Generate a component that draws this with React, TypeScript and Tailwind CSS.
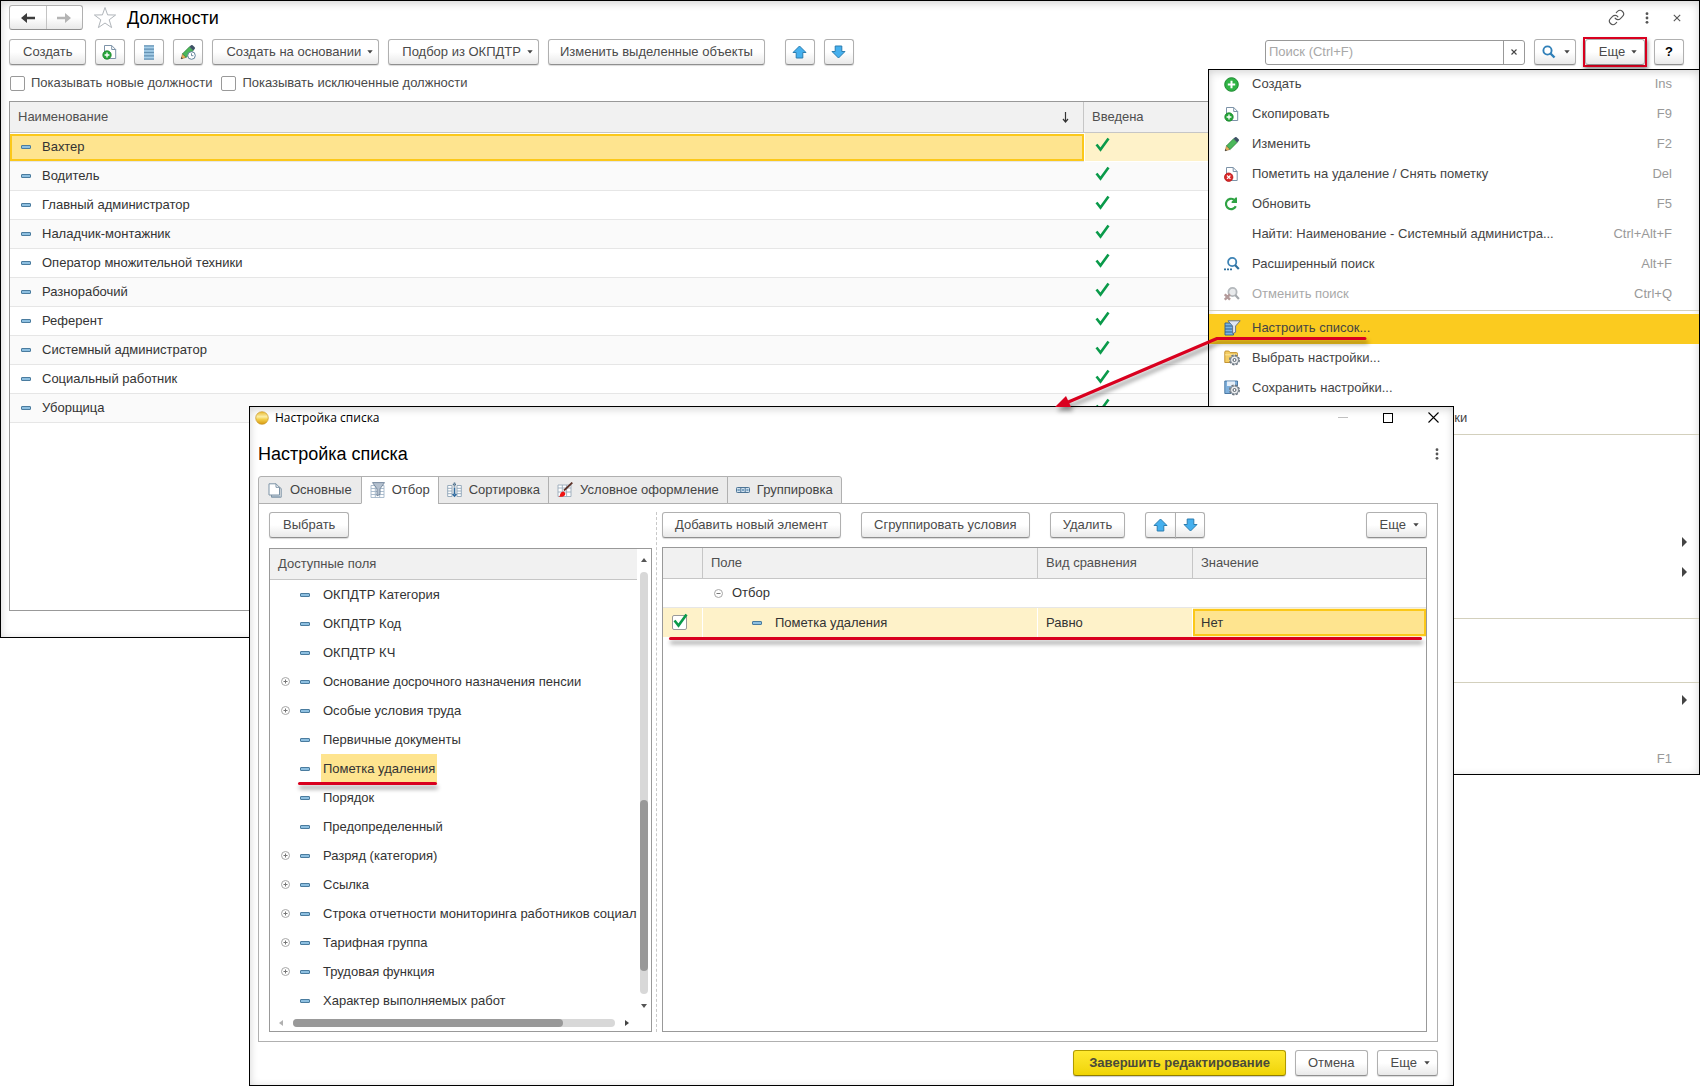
import type { ReactNode } from 'react';
import { Link } from 'lucide-react';

interface MenuEntry {
  label?: string;
  hotkey?: string;
  icon?: ReactNode;
  disabled?: boolean;
  active?: boolean;
  submenu?: boolean;
}

interface FieldItem {
  label: string;
  expandable?: boolean;
  selected?: boolean;
}

/* ---------- Icons ---------- */

const Caret = () => (
  <svg width="6" height="4" viewBox="0 0 6 4" className="shrink-0">
    <path d="M.3.3h5.4L3 3.4z" fill="#444" />
  </svg>
);

const DashIcon = () => (
  <svg width="10" height="4" viewBox="0 0 10 4" className="shrink-0">
    <rect x=".5" y=".5" width="9" height="3" rx=".4" fill="#8dbfe0" stroke="#4a7c9f" />
  </svg>
);

const CheckIcon = () => (
  <svg width="15" height="15" viewBox="0 0 15 15">
    <path d="M1.5 7.5l4 5L13.5 1.5" fill="none" stroke="#0a9a4a" strokeWidth="2.6" />
  </svg>
);

const ArrowUpIcon = () => (
  <svg width="15" height="14" viewBox="0 0 15 14">
    <path d="M7.5 1L14 7.5h-3.2V13H4.2V7.5H1z" fill="#45b0ee" stroke="#2b7db0" strokeLinejoin="round" />
  </svg>
);

const ArrowDownIcon = () => (
  <svg width="15" height="14" viewBox="0 0 15 14">
    <path d="M7.5 13L14 6.5h-3.2V1H4.2v5.5H1z" fill="#45b0ee" stroke="#2b7db0" strokeLinejoin="round" />
  </svg>
);

const NavArrow = ({ forward }: { forward?: boolean }) => (
  <svg width="14" height="12" viewBox="0 0 14 12">
    {forward ? (
      <path d="M0 4.8h8V1l6 5-6 5V7.2H0z" fill="#b4b4b4" />
    ) : (
      <path d="M14 4.8H6V1L0 6l6 5V7.2h8z" fill="#3c3c3c" />
    )}
  </svg>
);

const StarIcon = () => (
  <svg width="24" height="24" viewBox="0 0 24 24">
    <path
      d="M12 1.5l2.6 7.4 8 .1-6.4 4.8 2.4 7.8L12 17l-6.6 4.6 2.4-7.8L1.4 9l8-.1z"
      fill="#fff"
      stroke="#b0b5ba"
    />
  </svg>
);

const CopyDocIcon = () => (
  <svg width="16" height="16" viewBox="0 0 16 16">
    <path d="M2.5 1.5h7.2l4 4v9H2.5z" fill="#fff" stroke="#7d93a8" />
    <path d="M9.7 1.5v4h4" fill="none" stroke="#7d93a8" />
    <circle cx="5" cy="11" r="4.2" fill="#27a63a" stroke="#178227" strokeWidth=".8" />
    <path d="M5 8.6v4.8M2.6 11h4.8" stroke="#fff" strokeWidth="1.3" />
  </svg>
);

const DeleteDocIcon = () => (
  <svg width="16" height="16" viewBox="0 0 16 16">
    <path d="M2.5 1.5h6.7l4 4v9H2.5z" fill="#fff" stroke="#7d93a8" />
    <path d="M9.2 1.5v4h4" fill="none" stroke="#7d93a8" />
    <circle cx="4.7" cy="11.2" r="4.2" fill="#dc2a2a" stroke="#b01818" strokeWidth=".8" />
    <path d="M3 9.5l3.4 3.4M6.4 9.5L3 12.9" stroke="#fff" strokeWidth="1.2" />
  </svg>
);

const ListIcon = () => (
  <svg width="12" height="15" viewBox="0 0 12 15">
    <rect x="1" y=".5" width="10" height="14" fill="#8fbcdb" />
    <path d="M1 .8h10M1 4.2h10M1 7.5h10M1 10.8h10M1 14.2h10" stroke="#6592b3" />
    <path d="M1 2.5h10M1 5.8h10M1 9.1h10M1 12.5h10" stroke="#a9cfe8" />
  </svg>
);

const PencilShape = () => (
  <>
    <path d="M1.2 14.8l1.3-5 3.7 3.6z" fill="#f0b45a" stroke="#8a6a3a" strokeWidth=".6" />
    <path d="M2.5 9.8l7-7 3.700 3.600-7 7z" fill="#4bb85a" stroke="#2f7a3c" strokeWidth=".7" />
    <path d="M9.500 2.800l1.500-1.500q.8-.7 1.600 0l2.100 2q.7.800 0 1.600l-1.500 1.500z" fill="#3e5266" />
    <path d="M.9 15.100l.6-2 1.400 1.400z" fill="#3a3a3a" />
  </>
);

const PencilIcon = () => (
  <svg width="16" height="16" viewBox="0 0 16 16">
    <PencilShape />
  </svg>
);

const PencilClockIcon = () => (
  <svg width="16" height="16" viewBox="0 0 16 16">
    <PencilShape />
    <circle cx="11.5" cy="11.5" r="3.8" fill="#fff" stroke="#5d8099" />
    <path d="M11.5 9.3v2.4h1.9" fill="none" stroke="#5d8099" strokeWidth=".9" />
  </svg>
);

const PlusCircleIcon = () => (
  <svg width="15" height="15" viewBox="0 0 15 15">
    <circle cx="7.5" cy="7.5" r="6.8" fill="#2fb344" stroke="#1d8a30" />
    <path d="M7.5 3.8v7.4M3.8 7.5h7.4" stroke="#fff" strokeWidth="2" />
  </svg>
);

const RefreshIcon = () => (
  <svg width="14" height="14" viewBox="0 0 14 14">
    <path d="M11.8 9.3A5.2 5.2 0 1 1 10 2.6" fill="none" stroke="#2fa344" strokeWidth="2.2" />
    <path d="M7.6 5.9V4.7L11.6.6H13v5.3z" fill="#2fa344" />
  </svg>
);

const SearchIcon = () => (
  <svg width="14" height="14" viewBox="0 0 14 14">
    <circle cx="5.5" cy="5.5" r="4.1" fill="none" stroke="#2f7fb8" strokeWidth="1.9" />
    <path d="M8.5 8.5l4 4" stroke="#2f7fb8" strokeWidth="2.4" />
  </svg>
);

const AdvancedSearchIcon = () => (
  <svg width="16" height="14" viewBox="0 0 16 14">
    <circle cx="8.2" cy="5" r="4.1" fill="none" stroke="#3d83b5" strokeWidth="1.8" />
    <path d="M11 8l3.8 3.9" stroke="#2f6f9c" strokeWidth="2.2" />
    <path d="M0 12.4h2M3 12.4h2M6 12.4h2" stroke="#2f6f9c" strokeWidth="1.8" />
  </svg>
);

const CancelSearchIcon = () => (
  <svg width="16" height="14" viewBox="0 0 16 14">
    <circle cx="8.5" cy="5" r="4.1" fill="#e8eaec" stroke="#b4b8bc" strokeWidth="1.8" />
    <path d="M11.3 8l3.6 3.9" stroke="#a4a8ac" strokeWidth="2.2" />
    <path d="M.8 7.3l5.2 5.4M6 7.3L.8 12.7" stroke="#b39a9a" strokeWidth="2.4" />
  </svg>
);

const FunnelListIcon = () => (
  <svg width="17" height="16" viewBox="0 0 17 16">
    <path d="M1 3h8.500v12H1z" fill="#7ab4e4" stroke="#2f5f8c" strokeWidth=".9" />
    <path d="M1 6h8.500M1 9h8.500M1 12h8.500" stroke="#2f5f8c" />
    <path d="M4 .8h12.200L11.600 6v6.200l-3 1.400V6z" fill="#dfe6f2" stroke="#5b6d86" strokeWidth=".9" />
  </svg>
);

const Gear = () => (
  <>
    <circle cx="10.5" cy="10" r="4.6" fill="#eceef0" stroke="#6b7681" strokeWidth="1.8" strokeDasharray="2.2 1.4" />
    <circle cx="10.5" cy="10" r="4" fill="#eef0f2" stroke="#6b7681" strokeWidth=".8" />
    <circle cx="10.5" cy="10" r="1.5" fill="#fff" stroke="#4f5963" />
  </>
);

const FolderGearIcon = () => (
  <svg width="17" height="16" viewBox="0 0 17 16">
    <path d="M.8 12.5V2q0-1 1-1h3l1.4 1.6h6.3q1 0 1 1v8.9z" fill="#f4cd62" stroke="#bd8a26" strokeWidth=".9" />
    <path d="M1.2 4.8h12" stroke="#fbe6a6" />
    <Gear />
  </svg>
);

const DiskGearIcon = () => (
  <svg width="17" height="16" viewBox="0 0 17 16">
    <path d="M.8 1h12.7v12.5H.8z" fill="#7fb0dc" stroke="#3f6f9c" strokeWidth=".9" />
    <path d="M3 1.4h8v4.6H3z" fill="#e6eff8" />
    <Gear />
  </svg>
);

const DotsIcon = () => (
  <svg width="4" height="12" viewBox="0 0 4 12" fill="#555">
    <circle cx="2" cy="1.7" r="1.4" />
    <circle cx="2" cy="6" r="1.4" />
    <circle cx="2" cy="10.3" r="1.4" />
  </svg>
);

const CrossIcon = () => (
  <svg width="8" height="8" viewBox="0 0 8 8">
    <path d="M.8.8l6.4 6.4M7.2.8L.8 7.2" stroke="#555" strokeWidth="1.1" />
  </svg>
);

const PagesIcon = () => (
  <svg width="14" height="15" viewBox="0 0 14 15">
    <path d="M3.500 3v9.500H12v1.800H3.500z" fill="#a9bccb" />
    <path d="M1 .8h7L11.500 4.300V12H1z" fill="#fff" stroke="#7c93a6" />
    <path d="M8 .8v3.500h3.500" fill="none" stroke="#7c93a6" />
    <path d="M3.500 12v2.200h9.700V5.500l-1.700-1.200" fill="none" stroke="#7c93a6" />
  </svg>
);

const FunnelTableIcon = () => (
  <svg width="15" height="16" viewBox="0 0 15 16">
    <path d="M1 3.5h13v12H1zM5.3 3.5v12M9.7 3.5v12M1 6.5h13M1 9.5h13M1 12.5h13" fill="#fff" stroke="#a3b6c8" strokeWidth=".9" />
    <path d="M2.500.6h12L10 6.800v5.500l-3 1.600V6.800z" fill="#b4c0ce" stroke="#6f8398" strokeWidth=".9" />
  </svg>
);

const SortIcon = () => (
  <svg width="15" height="16" viewBox="0 0 15 16">
    <path
      d="M.7 3.500h4.300v11H.7zM10 3.500h4.300v11H10zM.7 6.300h4.300M.7 9h4.300M.7 11.700h4.300M10 6.300h4.300M10 9h4.300M10 11.700h4.300"
      fill="#fff"
      stroke="#8fa5b8"
      strokeWidth=".9"
    />
    <path d="M7.500 5.500v7M5.600 12l1.900 2.200L9.400 12" fill="none" stroke="#2f6ba0" strokeWidth="1.500" />
    <path d="M7.500.5v4.500M5.800 2.500h3.400" stroke="#4c6f8c" strokeWidth="1.500" strokeDasharray="1.200 .8" />
  </svg>
);

const BrushIcon = () => (
  <svg width="16" height="16" viewBox="0 0 16 16">
    <path d="M1 3h13v11.5H1zM5.3 3v11.5M9.6 3v11.5M1 6h13M1 10h13" fill="#fff" stroke="#9aaaba" strokeWidth=".9" />
    <path d="M7 8.500L15.300.6" stroke="#5a3026" strokeWidth="1.800" />
    <path d="M1.800 14.800q1.300-.8 1.400-2.700.8-2.900 3.400-2.700l1.700 1.700q.2 3.200-3 3.700z" fill="#f01414" />
  </svg>
);

const GroupIcon = () => (
  <svg width="14" height="6" viewBox="0 0 14 6">
    <rect x=".5" y=".5" width="13" height="5" rx=".8" fill="#cfe0ee" stroke="#4d7495" />
    <path d="M4.800.5v5M9.200.5v5" stroke="#4d7495" />
    <path d="M1.500 3h2.300M6 3h2M10.400 3h2" stroke="#5f8fb5" strokeWidth="1.500" />
  </svg>
);

const ExpandIcon = ({ open }: { open?: boolean }) => (
  <svg width="9" height="9" viewBox="0 0 9 9" fill="none" stroke="#a6a6a6">
    <circle cx="4.5" cy="4.5" r="4" />
    <path d={open ? 'M2.500 4.500h4' : 'M2.500 4.500h4M4.500 2.500v4'} stroke="#777" />
  </svg>
);

const AppBallIcon = () => (
  <svg width="14" height="14" viewBox="0 0 14 14">
    <defs>
      <linearGradient id="ball" x1="0" y1="0" x2="0" y2="1">
        <stop offset="0" stopColor="#e9b92c" />
        <stop offset=".4" stopColor="#fbeea8" />
        <stop offset=".6" stopColor="#f3cf4c" />
        <stop offset="1" stopColor="#d79a12" />
      </linearGradient>
    </defs>
    <circle cx="7" cy="7" r="6.3" fill="url(#ball)" stroke="#c9962a" strokeWidth=".7" />
  </svg>
);

/* ---------- Data ---------- */

const POSITIONS: string[] = [
  'Вахтер',
  'Водитель',
  'Главный администратор',
  'Наладчик-монтажник',
  'Оператор множительной техники',
  'Разнорабочий',
  'Референт',
  'Системный администратор',
  'Социальный работник',
  'Уборщица',
];

const MENU_GROUPS: MenuEntry[][] = [
  [
    { label: 'Создать', hotkey: 'Ins', icon: <PlusCircleIcon /> },
    { label: 'Скопировать', hotkey: 'F9', icon: <CopyDocIcon /> },
    { label: 'Изменить', hotkey: 'F2', icon: <PencilIcon /> },
    { label: 'Пометить на удаление / Снять пометку', hotkey: 'Del', icon: <DeleteDocIcon /> },
    { label: 'Обновить', hotkey: 'F5', icon: <RefreshIcon /> },
    { label: 'Найти: Наименование - Системный администра...', hotkey: 'Ctrl+Alt+F' },
    { label: 'Расширенный поиск', hotkey: 'Alt+F', icon: <AdvancedSearchIcon /> },
    { label: 'Отменить поиск', hotkey: 'Ctrl+Q', icon: <CancelSearchIcon />, disabled: true },
  ],
  [
    { label: 'Настроить список...', icon: <FunnelListIcon />, active: true },
    { label: 'Выбрать настройки...', icon: <FolderGearIcon /> },
    { label: 'Сохранить настройки...', icon: <DiskGearIcon /> },
    { label: 'Установить стандартные настройки' },
  ],
  [{}, {}, {}, { submenu: true }, { submenu: true }, {}],
  [{}, {}],
  [{ submenu: true }, {}, { hotkey: 'F1' }],
];

const FIELDS: FieldItem[] = [
  { label: 'ОКПДТР Категория' },
  { label: 'ОКПДТР Код' },
  { label: 'ОКПДТР КЧ' },
  { label: 'Основание досрочного назначения пенсии', expandable: true },
  { label: 'Особые условия труда', expandable: true },
  { label: 'Первичные документы' },
  { label: 'Пометка удаления', selected: true },
  { label: 'Порядок' },
  { label: 'Предопределенный' },
  { label: 'Разряд (категория)', expandable: true },
  { label: 'Ссылка', expandable: true },
  { label: 'Строка отчетности мониторинга работников социальн', expandable: true },
  { label: 'Тарифная группа', expandable: true },
  { label: 'Трудовая функция', expandable: true },
  { label: 'Характер выполняемых работ' },
];

const TABS: { title: string; icon: ReactNode; active?: boolean }[] = [
  { title: 'Основные', icon: <PagesIcon /> },
  { title: 'Отбор', icon: <FunnelTableIcon />, active: true },
  { title: 'Сортировка', icon: <SortIcon /> },
  { title: 'Условное оформление', icon: <BrushIcon /> },
  { title: 'Группировка', icon: <GroupIcon /> },
];

/* ---------- Controls ---------- */

const BTN =
  'flex h-[26px] shrink-0 items-center justify-center rounded-[3px] border border-[#b0b0b0] border-b-[#8f8f8f] bg-linear-to-b from-white from-50% to-[#e9e9e9] text-[#4a4a4a] shadow-[0_1px_1px_rgba(0,0,0,0.15)] whitespace-nowrap';

const Button = ({ children, className = 'px-3', label }: { children: ReactNode; className?: string; label?: string }) => (
  <button type="button" aria-label={label} className={`${BTN} ${className}`}>
    {children}
  </button>
);

const CheckOption = ({ label }: { label: string }) => (
  <label className="flex items-center gap-[6px] text-[#4a4a4a]">
    <input type="checkbox" className="h-[15px] w-[15px] appearance-none rounded-[2px] border border-[#999] bg-white" />
    {label}
  </label>
);

const MoreMenu = () => (
  <nav className="absolute top-[69px] right-0 w-[492px] border border-black bg-white shadow-[inset_0_2px_8px_rgba(0,0,0,0.18)]">
    {MENU_GROUPS.map((group, g) => (
      <div key={g} className={g > 0 ? 'border-t border-[#d3d0bd] pt-[3px]' : ''}>
        {group.map((item, i) => (
          <button
            type="button"
            key={i}
            disabled={item.disabled}
            className={`flex h-[30px] w-full items-center pr-[27px] pb-[2px] pl-[15px] text-left ${item.active ? 'bg-[#fbcb1f]' : ''} ${g === 4 ? 'last:h-7' : ''}`}
          >
            <span className="flex w-7 shrink-0">{item.icon}</span>
            <span className={item.disabled ? 'flex-1 text-[#a9a9a9]' : 'flex-1 text-[#444]'}>{item.label}</span>
            <span className="text-[#999]">{item.hotkey}</span>
            {item.submenu && (
              <svg width="5" height="10" viewBox="0 0 5 10" className="-mr-[15px]">
                <path d="M0 0l5 5-5 5z" fill="#444" />
              </svg>
            )}
          </button>
        ))}
      </div>
    ))}
  </nav>
);

const PositionsWindow = () => (
  <main className="w-full border border-black bg-white pb-[26px] shadow-[inset_0_2px_8px_rgba(0,0,0,0.18)]">
    <header className="flex h-[29px] items-center pt-1 pr-[18px] pl-2">
      <div className="flex h-[25px] w-[74px] rounded-[3px] border border-[#b0b0b0] border-b-[#8f8f8f] bg-linear-to-b from-white from-50% to-[#e9e9e9]">
        <button type="button" aria-label="Назад" className="flex flex-1 items-center justify-center border-r border-[#c4c4c4]">
          <NavArrow />
        </button>
        <button type="button" aria-label="Вперед" className="flex flex-1 items-center justify-center">
          <NavArrow forward />
        </button>
      </div>
      <button type="button" aria-label="В избранное" className="ml-[10px]">
        <StarIcon />
      </button>
      <h1 className="ml-[10px] flex-1 text-lg leading-6 text-black">Должности</h1>
      <button type="button" aria-label="Ссылка" className="mr-5">
        <Link size={17} strokeWidth={1.6} color="#555" />
      </button>
      <button type="button" aria-label="Меню" className="mr-6">
        <DotsIcon />
      </button>
      <button type="button" aria-label="Закрыть">
        <CrossIcon />
      </button>
    </header>

    <div className="mt-[7px] flex h-[30px] items-center gap-[9px] pr-[15px] pl-2">
      <Button className="px-[13px]">Создать</Button>
      <Button className="w-[30px]" label="Скопировать">
        <CopyDocIcon />
      </Button>
      <Button className="w-[30px]" label="Список">
        <ListIcon />
      </Button>
      <Button className="w-[30px]" label="История">
        <PencilClockIcon />
      </Button>
      <Button className="gap-[6px] pr-[5px] pl-[13px]">
        Создать на основании <Caret />
      </Button>
      <Button className="gap-[6px] pr-[5px] pl-[13px]">
        Подбор из ОКПДТР <Caret />
      </Button>
      <Button className="px-[11px]">Изменить выделенные объекты</Button>
      <Button className="ml-[11px] w-[30px]" label="Вверх">
        <ArrowUpIcon />
      </Button>
      <Button className="w-[30px]" label="Вниз">
        <ArrowDownIcon />
      </Button>
      <div className="ml-auto flex h-[25px] w-[260px] rounded-[3px] border border-[#999]">
        <input
          type="text"
          aria-label="Поиск"
          placeholder="Поиск (Ctrl+F)"
          className="min-w-0 flex-1 px-[3px] outline-none placeholder:text-[#a8a8a8]"
        />
        <button type="button" aria-label="Очистить" className="flex w-[21px] items-center justify-center border-l border-[#999]">
          <svg width="6" height="6" viewBox="0 0 6 6">
            <path d="M.5.5l5 5M5.500.5l-5 5" stroke="#444" strokeWidth="1.100" />
          </svg>
        </button>
      </div>
      <Button className="w-[42px] gap-2 pl-[2px]" label="Найти">
        <SearchIcon />
        <Caret />
      </Button>
      <div className="-mx-[2px] border-2 border-[#d9001f] shadow-[1px_3px_4px_rgba(0,0,0,0.4)]">
        <Button className="w-[60px] gap-[6px] pl-[6px]">
          Еще <Caret />
        </Button>
      </div>
      <Button className="w-[30px] font-bold text-black" label="Справка">
        ?
      </Button>
    </div>

    <div className="-mt-[2px] flex h-9 items-center gap-[9px] pl-[9px]">
      <CheckOption label="Показывать новые должности" />
      <CheckOption label="Показывать исключенные должности" />
    </div>

    <div className="mx-2 min-h-[510px] border border-[#999] bg-white">
      <table className="w-full table-fixed border-separate border-spacing-0 text-left">
        <thead>
          <tr className="bg-[#f1f1f1] text-[#4f4f4f]">
            <th className="h-[31px] border-r border-b border-[#c6c6c6] p-0 font-normal">
              <div className="flex items-center justify-between pr-[14px] pl-2">
                Наименование
                <svg width="7" height="11" viewBox="0 0 7 11">
                  <path d="M3.5 0v9.5M1 7l2.500 3L6 7" fill="none" stroke="#333" strokeWidth="1.200" />
                </svg>
              </div>
            </th>
            <th className="h-[31px] w-[606px] border-b border-[#c6c6c6] py-0 pr-0 pl-2 font-normal">Введена</th>
          </tr>
        </thead>
        <tbody className="text-[#333]">
          {POSITIONS.map((name, i) => (
            <tr key={name} className={i % 2 ? 'bg-[#fafafa]' : 'bg-white'}>
              <td className="h-[29px] border-b border-[#e6e6e6] p-0">
                <div
                  className={
                    i === 0
                      ? 'flex h-[27px] items-center gap-[11px] border-2 border-[#fbc81a] bg-[#fee48f] pl-[9px]'
                      : 'flex h-[27px] items-center gap-[11px] pl-[11px]'
                  }
                >
                  <DashIcon />
                  {name}
                </div>
              </td>
              <td
                className={
                  i === 0
                    ? 'border-b border-l border-white bg-[#fef2c9] pt-0 pr-0 pb-[6px] pl-[10px]'
                    : 'border-b border-[#e6e6e6] pt-0 pr-0 pb-[6px] pl-[11px]'
                }
              >
                <CheckIcon />
              </td>
            </tr>
          ))}
        </tbody>
      </table>
    </div>
  </main>
);

const AvailableFields = () => (
  <div className="mt-[10px] flex flex-col border border-[#999]">
    <div className="flex">
      <div className="min-w-0 flex-1 overflow-hidden">
        <div className="flex h-[31px] items-center border-b border-[#c6c6c6] bg-[#f1f1f1] pl-2 text-[#4f4f4f]">Доступные поля</div>
        <ul className="text-[#333]">
          {FIELDS.map((f) => (
            <li key={f.label} className="flex h-[29px] items-center pl-[11px] whitespace-nowrap">
              <span className="w-[19px] shrink-0">{f.expandable && <ExpandIcon />}</span>
              <DashIcon />
              {f.selected ? (
                <span className="relative ml-[11px] flex h-[29px] items-center bg-[#fee48f] px-[2px]">
                  {f.label}
                  <span className="absolute right-0 -bottom-[2px] -left-[23px] h-[3px] rounded-full bg-[#d9001f] shadow-[1px_4px_4px_rgba(0,0,0,0.4)]" />
                </span>
              ) : (
                <span className="ml-[13px]">{f.label}</span>
              )}
            </li>
          ))}
        </ul>
      </div>
      <div className="flex w-[14px] flex-col items-center pt-[9px] pb-[7px]">
        <svg width="6" height="4" viewBox="0 0 6 4">
          <path d="M0 4h6L3 0z" fill="#555" />
        </svg>
        <div className="my-[10px] flex w-2 flex-1 flex-col justify-end rounded-full bg-[#d8d8d8] pb-[23px]">
          <div className="h-[171px] rounded-full bg-[#999]" />
        </div>
        <svg width="6" height="4" viewBox="0 0 6 4">
          <path d="M0 0h6L3 4z" fill="#555" />
        </svg>
      </div>
    </div>
    <div className="flex h-4 items-center pr-[22px] pl-[9px]">
      <svg width="4" height="6" viewBox="0 0 4 6">
        <path d="M4 0v6L0 3z" fill="#b0b0b0" />
      </svg>
      <div className="mx-[10px] h-2 flex-1 rounded-full bg-[#d8d8d8]">
        <div className="h-2 w-[84%] rounded-full bg-[#999]" />
      </div>
      <svg width="4" height="6" viewBox="0 0 4 6">
        <path d="M0 0v6l4-3z" fill="#444" />
      </svg>
    </div>
  </div>
);

const FilterTable = () => (
  <div className="mt-[9px] flex-1 border border-[#999]">
    <table className="w-full table-fixed border-separate border-spacing-0 text-left">
      <thead>
        <tr className="bg-[#f1f1f1] text-[#4f4f4f]">
          <th aria-label="Использование" className="h-[31px] w-[40px] border-r border-b border-[#c6c6c6]" />
          <th className="border-r border-b border-[#c6c6c6] py-0 pr-0 pl-2 font-normal">Поле</th>
          <th className="w-[155px] border-r border-b border-[#c6c6c6] py-0 pr-0 pl-2 font-normal">Вид сравнения</th>
          <th className="w-[233px] border-b border-[#c6c6c6] py-0 pr-0 pl-2 font-normal">Значение</th>
        </tr>
      </thead>
      <tbody className="text-[#333]">
        <tr>
          <td className="h-[29px] border-b border-[#e6e6e6] p-0" />
          <td className="border-b border-[#e6e6e6] p-0" colSpan={3}>
            <div className="flex items-center gap-[9px] pl-[11px]">
              <ExpandIcon open />
              Отбор
            </div>
          </td>
        </tr>
        <tr className="bg-[#fef2c9]">
          <td className="h-[29px] border-r border-white p-0">
            <div className="relative ml-[9px] h-[15px] w-[15px]">
              <input
                type="checkbox"
                defaultChecked
                aria-label="Пометка удаления"
                className="block h-[15px] w-[15px] appearance-none rounded-[2px] border border-[#999] bg-white"
              />
              <span className="pointer-events-none absolute -top-[2px] left-px">
                <CheckIcon />
              </span>
            </div>
          </td>
          <td className="border-r border-white p-0">
            <div className="flex items-center gap-[13px] pl-[49px]">
              <DashIcon />
              Пометка удаления
            </div>
          </td>
          <td className="border-r border-white py-0 pr-0 pl-2">Равно</td>
          <td className="p-0">
            <div className="flex h-[27px] items-center border-2 border-[#fbc81a] bg-[#fee48f] pl-[6px]">Нет</div>
          </td>
        </tr>
      </tbody>
    </table>
    <div className="mr-1 ml-[6px] h-[3px] rounded-full bg-[#d9001f] shadow-[1px_4px_4px_rgba(0,0,0,0.4)]" />
  </div>
);

const ListSettingsDialog = () => (
  <section
    aria-label="Настройка списка"
    className="absolute top-[406px] right-[246px] left-[249px] border border-black bg-white pb-[9px] shadow-[inset_0_2px_8px_rgba(0,0,0,0.18)]"
  >
    <div className="flex h-[21px] items-center pr-[14px] pl-[5px]">
      <AppBallIcon />
      <span className="ml-[6px] flex-1 font-['Open_Sans',sans-serif] text-xs text-black">Настройка списка</span>
      <button type="button" aria-label="Свернуть" className="mr-[35px] h-px w-[10px] bg-[#c0c0c0]" />
      <button type="button" aria-label="Развернуть" className="mr-[35px] h-[10px] w-[10px] border border-black" />
      <button type="button" aria-label="Закрыть">
        <svg width="11" height="11" viewBox="0 0 11 11">
          <path d="M.5.5l10 10M10.500.5l-10 10" stroke="#000" strokeWidth="1.100" />
        </svg>
      </button>
    </div>
    <div className="flex h-12 items-center justify-between pt-1 pr-[14px] pl-2">
      <h2 className="text-lg leading-6 text-black">Настройка списка</h2>
      <button type="button" aria-label="Меню">
        <DotsIcon />
      </button>
    </div>

    <div className="relative -mb-px ml-2 flex h-7">
      {TABS.map((t) => (
        <button
          type="button"
          key={t.title}
          className={`-mr-px flex items-center gap-[7px] border border-[#b0b0b0] px-2 text-[#444] first:gap-2 first:rounded-tl-[3px] first:px-[9px] last:rounded-tr-[3px] ${t.active ? 'border-b-white bg-white' : 'bg-[#ebebeb]'}`}
        >
          {t.icon}
          {t.title}
        </button>
      ))}
    </div>

    <div className="mr-[15px] ml-2 flex border border-[#b0b0b0] px-[10px] pt-2 pb-[9px]">
      <div className="flex w-[383px] flex-col">
        <div className="flex">
          <Button className="px-[13px]">Выбрать</Button>
        </div>
        <AvailableFields />
      </div>
      <div className="mr-[5px] ml-1 border-l border-dashed border-[#c8c8c8]" />
      <div className="flex min-w-0 flex-1 flex-col">
        <div className="flex">
          <Button>Добавить новый элемент</Button>
          <Button className="ml-5 px-3">Сгруппировать условия</Button>
          <Button className="ml-5 px-3">Удалить</Button>
          <div className="ml-5 flex">
            <Button className="w-[31px] rounded-r-none" label="Вверх">
              <ArrowUpIcon />
            </Button>
            <Button className="-ml-px w-[30px] rounded-l-none" label="Вниз">
              <ArrowDownIcon />
            </Button>
          </div>
          <Button className="ml-auto gap-[7px] pr-[7px] pl-[13px]">
            Еще <Caret />
          </Button>
        </div>
        <FilterTable />
      </div>
    </div>

    <footer className="mt-2 mr-[15px] flex justify-end gap-[9px]">
      <button
        type="button"
        className="flex h-[26px] items-center rounded-[3px] border border-[#b09a00] border-b-[#8f7d00] bg-linear-to-b from-[#ffe92e] to-[#f0d400] px-[15px] font-bold text-[#4a4a3a] shadow-[0_1px_1px_rgba(0,0,0,0.2)]"
      >
        Завершить редактирование
      </button>
      <Button>Отмена</Button>
      <Button className="gap-[7px] pr-[7px] pl-[13px]">
        Еще <Caret />
      </Button>
    </footer>
  </section>
);

// Callout from the highlighted menu item down to the dialog
const Callout = () => (
  <svg
    width="320"
    height="90"
    viewBox="0 0 320 90"
    className="pointer-events-none absolute top-[328px] right-[330px] drop-shadow-[2px_4px_2px_rgba(0,0,0,0.4)]"
  >
    <path d="M315 10.5H167L16 75" fill="none" stroke="#d9001f" strokeWidth="3" strokeLinecap="round" strokeLinejoin="round" />
    <path d="M5 79l11-11 5 11z" fill="#d9001f" />
  </svg>
);

export default function App() {
  return (
    <div className="relative min-h-screen w-full overflow-hidden bg-white font-['Liberation_Sans',Arial,sans-serif] text-[13px] leading-4">
      <PositionsWindow />
      <MoreMenu />
      <ListSettingsDialog />
      <Callout />
    </div>
  );
}
